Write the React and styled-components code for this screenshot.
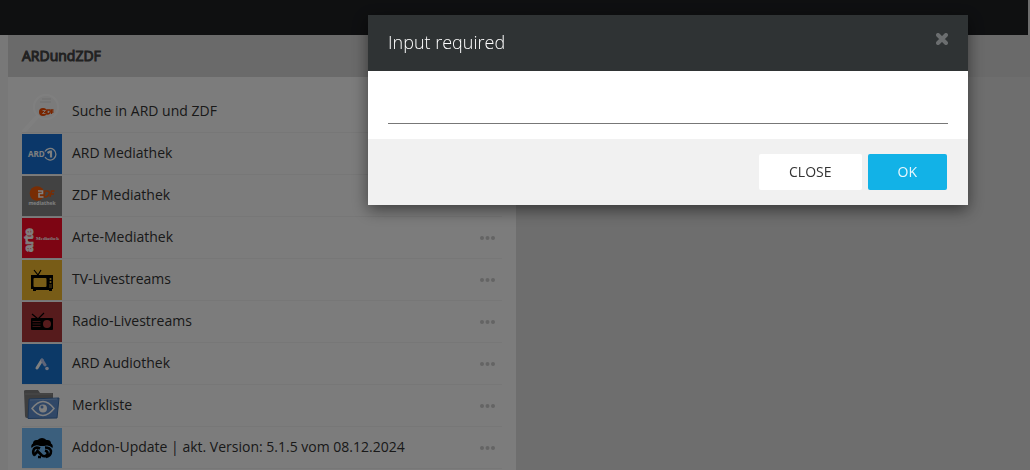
import React, { useState } from "react";
import styled, { createGlobalStyle } from "styled-components";

const GlobalStyle = createGlobalStyle`
  * {
    box-sizing: border-box;
  }
  body {
    margin: 0;
    background: #ddd;
    color: #333;
    font-family: "Open Sans", sans-serif;
    font-size: 14px;
    line-height: 20px;
  }
`;

const Page = styled.div`
  min-height: 100vh;
  display: flex;
  flex-direction: column;
`;

const NavBar = styled.nav`
  height: 35px;
  margin-right: 2px;
  background: #1e2023;
`;

const Content = styled.div`
  flex: 1;
  display: flex;
  flex-direction: column;
  border-left: 8px solid #f1f1f1;
`;

const SubHeader = styled.header`
  height: 42px;
  padding: 0 14px;
  display: flex;
  align-items: center;
  background: #d5d5d5;
`;

const Title = styled.h1`
  margin: 0;
  color: #444;
  font-size: 14px;
  font-weight: 400;
  line-height: 20px;
  -webkit-text-stroke: 1px #444;
`;

const Panel = styled.main`
  flex: 1;
  width: 508px;
  max-width: 100%;
  padding: 14px 14px 0;
  background: #f9f9f9;
`;

const List = styled.ul`
  margin: 0;
  padding: 0;
  list-style: none;
`;

const Row = styled.li`
  display: flex;
  align-items: center;
  gap: 10px;
  padding: 1px 6px 0 0;
  border-bottom: 1px solid #eee;
`;

const Thumb = styled.svg`
  width: 40px;
  height: 40px;
  flex: none;
  background: ${({ $bg }) => $bg || "transparent"};
`;

const RowLink = styled.a`
  flex: 1;
  padding-bottom: 2px;
  color: #333;
  text-decoration: none;
`;

const MenuButton = styled.button`
  padding: 0;
  border: none;
  background: none;
  display: flex;
  cursor: pointer;
  svg {
    display: block;
  }
`;

const Backdrop = styled.div`
  position: fixed;
  inset: 0;
  display: flex;
  justify-content: flex-end;
  align-items: flex-start;
  padding: 15px 62px;
  background: rgba(0, 0, 0, 0.5);
`;

const Modal = styled.form`
  width: 600px;
  max-width: 100%;
  background: #fff;
  box-shadow: 0 5px 15px rgba(0, 0, 0, 0.5);
`;

const ModalHeader = styled.div`
  display: flex;
  justify-content: space-between;
  align-items: flex-start;
  padding: 18px 20px 20px;
  background: #2f3334;
`;

const ModalTitle = styled.label`
  color: #fff;
  font-size: 18px;
  font-weight: 300;
  line-height: 18px;
`;

const CloseIcon = styled.button`
  padding: 0;
  border: none;
  background: none;
  cursor: pointer;
  svg {
    display: block;
  }
`;

const ModalBody = styled.div`
  padding: 15px 20px;
`;

const TextInput = styled.input`
  display: block;
  width: 100%;
  height: 38px;
  padding: 0;
  border: none;
  border-bottom: 1px solid #777;
  outline: none;
  font: inherit;
`;

const ModalFooter = styled.div`
  display: flex;
  justify-content: flex-end;
  gap: 6px;
  padding: 15px 21px;
  background: #f1f1f1;
`;

const Button = styled.button`
  height: 36px;
  padding: 0 30px;
  border: none;
  border-radius: 2px;
  background: ${({ $primary }) => ($primary ? "#12b2e7" : "#fff")};
  color: ${({ $primary }) => ($primary ? "#e8f7fd" : "#333")};
  font: inherit;
  text-transform: uppercase;
  cursor: pointer;
`;

const SearchThumb = () => (
  <Thumb viewBox="0 0 40 40">
    <path d="M14 26L2 39" stroke="#fff" strokeWidth="4" strokeLinecap="round" />
    <circle cx="24" cy="15" r="12" fill="#f6f6f6" stroke="#fff" strokeWidth="2" />
    <path d="M18 10h11M20 7h9" stroke="#ebebeb" strokeWidth="2" />
    <circle cx="21" cy="20" r="4" fill="#f04a00" />
    <path d="M25 18v4q4 0 3-4zM29.500 22v-4h2M29.500 20h2" fill="none" stroke="#f04a00" strokeWidth="1.300" />
    <path d="M20.500 18.500h3l-3 3h3" fill="none" stroke="#fff" strokeWidth="0.800" />
  </Thumb>
);

const ArdThumb = () => (
  <Thumb viewBox="0 0 40 40" $bg="#166fd2">
    <text x="6" y="23" fill="#fff" fontSize="8" fontWeight="700" fontFamily="Open Sans, sans-serif">
      ARD
    </text>
    <path d="M23 17.500a5.800 5.800 0 1 1 0 5.500" fill="none" stroke="#fff" strokeWidth="1.300" />
    <path d="M25.500 19l2.500-1.500h1v6" fill="none" stroke="#fff" strokeWidth="2.200" />
  </Thumb>
);

const ZdfThumb = () => (
  <Thumb viewBox="0 0 40 40" $bg="#858585">
    <circle cx="15" cy="17.500" r="7.300" fill="#f05a08" />
    <path d="M23 15h2q3 0 2 3t-4 3h-1zM28 21l1.500-6h3M29 18h3" fill="none" stroke="#f05a08" strokeWidth="1.500" />
    <path d="M16 15h4.500v2.500H17V21h4.500" fill="none" stroke="#fff" strokeWidth="1.600" />
    <text x="20" y="29" textAnchor="middle" fill="#fff" fontSize="5" fontWeight="700" fontFamily="Open Sans, sans-serif">
      mediathek
    </text>
  </Thumb>
);

const ArteThumb = () => (
  <Thumb viewBox="0 0 40 40" $bg="#fa0a26">
    <text transform="translate(11 34) rotate(-90)" fill="#fff" fontSize="13" fontWeight="700" fontFamily="Liberation Sans, sans-serif" stroke="#fff" strokeWidth="0.800">
      arte
    </text>
    <text x="14" y="22" fill="#fff" fontSize="5" fontWeight="700" fontFamily="Liberation Serif, serif">
      Mediathek
    </text>
  </Thumb>
);

const TvThumb = () => (
  <Thumb viewBox="0 0 40 40" $bg="#f0b82e">
    <path d="M12 10l4 5 3-5" fill="none" stroke="#000" strokeWidth="1.200" />
    <path d="M9 15h22v14h-1v2h-3v-1H14v1h-3v-2H9z" fill="#000" />
    <rect x="11.500" y="18" width="13" height="9" rx="1" fill="#f0b82e" />
    <circle cx="28.500" cy="19" r="1" fill="#f0b82e" />
    <circle cx="28.500" cy="22" r="1" fill="#f0b82e" />
    <path d="M27 25h3M27 27h3" stroke="#f0b82e" strokeWidth="0.700" />
  </Thumb>
);

const RadioThumb = () => (
  <Thumb viewBox="0 0 40 40" $bg="#ad3638">
    <path d="M10 12l6 5 6-6" fill="none" stroke="#000" strokeWidth="1.200" />
    <rect x="9" y="16" width="22" height="12" rx="1" fill="#000" />
    <path d="M10.500 19.500h8M10.500 22h8M10.500 24.500h8" stroke="#ad3638" strokeWidth="0.700" />
    <circle cx="25" cy="22" r="4" fill="#ad3638" />
  </Thumb>
);

const AudioThumb = () => (
  <Thumb viewBox="0 0 40 40" $bg="#1973cf">
    <path d="M15 24l5-8" stroke="#fff" strokeWidth="3" strokeLinecap="round" />
    <path d="M20 16l3 5" stroke="#bcc8f0" strokeWidth="3" strokeLinecap="round" />
    <circle cx="25" cy="24.500" r="1.800" fill="#dfe6ff" />
  </Thumb>
);

const FolderThumb = () => (
  <Thumb viewBox="0 0 40 40">
    <path d="M2 5q0-1 2-1h12l2 3h13v25H5q-2 0-2-2z" fill="#7c7c7c" />
    <path d="M3 8h27" stroke="#969696" />
    <path d="M7 13l30-1-2 20-29 .5z" fill="#608fce" stroke="#3d6daa" />
    <path d="M8 14l27-1" stroke="#8ab0df" />
    <path d="M10 22.500q11-14 22 0q-11 14-22 0z" fill="none" stroke="#fff" strokeWidth="1.500" />
    <circle cx="21" cy="22.500" r="4" fill="#fff" />
    <circle cx="20" cy="21" r="1.500" fill="#608fce" />
  </Thumb>
);

const UpdateThumb = () => (
  <Thumb viewBox="0 0 40 40" $bg="#76bffa">
    <path d="M9.500 20q-1-3 1.500-4.500 0-4 4.500-3.500 4.500-4 9 0 4.500-.5 4.500 3.500 2.500 1.500 1.500 4.500-3-3-6-2.500-5 1-8 0-4-1-7 2.500z" fill="#000" />
    <path d="M18 20.500q-4-2-6 .5-2 4 1 6.500M12.500 27l3-4 4 4q3 2.500 5.500 0 2-3-2-4.500M23 19.500q5 0 6 3.500 0 5-5 6M16 29h3" fill="none" stroke="#000" strokeWidth="2.600" />
  </Thumb>
);

const items = [
  { label: "Suche in ARD und ZDF", icon: SearchThumb },
  { label: "ARD Mediathek", icon: ArdThumb },
  { label: "ZDF Mediathek", icon: ZdfThumb },
  { label: "Arte-Mediathek", icon: ArteThumb },
  { label: "TV-Livestreams", icon: TvThumb },
  { label: "Radio-Livestreams", icon: RadioThumb },
  { label: "ARD Audiothek", icon: AudioThumb },
  { label: "Merkliste", icon: FolderThumb },
  { label: "Addon-Update | akt. Version: 5.1.5 vom 08.12.2024", icon: UpdateThumb },
];

const InputModal = ({ onClose }) => {
  const [value, setValue] = useState("");

  const submit = (e) => {
    e.preventDefault();
    onClose(value);
  };

  return (
    <Backdrop>
      <Modal role="dialog" onSubmit={submit}>
        <ModalHeader>
          <ModalTitle htmlFor="modal-input">Input required</ModalTitle>
          <CloseIcon type="button" aria-label="Close" onClick={() => onClose()}>
            <svg width="12" height="12" viewBox="0 0 12 12">
              <path d="M2 2l8 8M10 2l-8 8" stroke="#6b6e6f" strokeWidth="4" strokeLinecap="round" />
            </svg>
          </CloseIcon>
        </ModalHeader>
        <ModalBody>
          <TextInput id="modal-input" type="text" value={value} onChange={(e) => setValue(e.target.value)} />
        </ModalBody>
        <ModalFooter>
          <Button type="button" onClick={() => onClose()}>
            Close
          </Button>
          <Button type="submit" $primary>
            OK
          </Button>
        </ModalFooter>
      </Modal>
    </Backdrop>
  );
};

const App = () => {
  const [open, setOpen] = useState(true);

  return (
    <>
      <GlobalStyle />
      <Page>
        <NavBar />
        <Content>
          <SubHeader>
            <Title>ARDundZDF</Title>
          </SubHeader>
          <Panel>
            <List>
              {items.map(({ label, icon: Icon }) => (
                <Row key={label}>
                  <Icon />
                  <RowLink href="#">{label}</RowLink>
                  <MenuButton type="button" aria-label="Menu">
                    <svg width="16" height="4" viewBox="0 0 16 4" fill="#c8c8c8">
                      <circle cx="2" cy="2" r="2" />
                      <circle cx="7.500" cy="2" r="2" />
                      <circle cx="13" cy="2" r="2" />
                    </svg>
                  </MenuButton>
                </Row>
              ))}
            </List>
          </Panel>
        </Content>
      </Page>
      {open && <InputModal onClose={() => setOpen(false)} />}
    </>
  );
};

export default App;
